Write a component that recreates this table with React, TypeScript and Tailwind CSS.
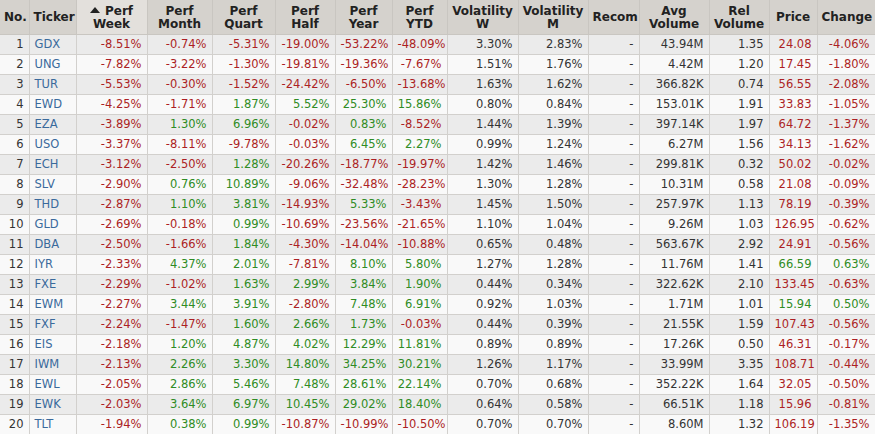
type Row = [string, string, string, string, string, string, string, string, string, string, string, string, string, string];

const rows: Row[] = [
  ["1", "GDX", "-8.51%", "-0.74%", "-5.31%", "-19.00%", "-53.22%", "-48.09%", "3.30%", "2.83%", "43.94M", "1.35", "24.08", "-4.06%"],
  ["2", "UNG", "-7.82%", "-3.22%", "-1.30%", "-19.81%", "-19.36%", "-7.67%", "1.51%", "1.76%", "4.42M", "1.20", "17.45", "-1.80%"],
  ["3", "TUR", "-5.53%", "-0.30%", "-1.52%", "-24.42%", "-6.50%", "-13.68%", "1.63%", "1.62%", "366.82K", "0.74", "56.55", "-2.08%"],
  ["4", "EWD", "-4.25%", "-1.71%", "1.87%", "5.52%", "25.30%", "15.86%", "0.80%", "0.84%", "153.01K", "1.91", "33.83", "-1.05%"],
  ["5", "EZA", "-3.89%", "1.30%", "6.96%", "-0.02%", "0.83%", "-8.52%", "1.44%", "1.39%", "397.14K", "1.97", "64.72", "-1.37%"],
  ["6", "USO", "-3.37%", "-8.11%", "-9.78%", "-0.03%", "6.45%", "2.27%", "0.99%", "1.24%", "6.27M", "1.56", "34.13", "-1.62%"],
  ["7", "ECH", "-3.12%", "-2.50%", "1.28%", "-20.26%", "-18.77%", "-19.97%", "1.42%", "1.46%", "299.81K", "0.32", "50.02", "-0.02%"],
  ["8", "SLV", "-2.90%", "0.76%", "10.89%", "-9.06%", "-32.48%", "-28.23%", "1.30%", "1.28%", "10.31M", "0.58", "21.08", "-0.09%"],
  ["9", "THD", "-2.87%", "1.10%", "3.81%", "-14.93%", "5.33%", "-3.43%", "1.45%", "1.50%", "257.97K", "1.13", "78.19", "-0.39%"],
  ["10", "GLD", "-2.69%", "-0.18%", "0.99%", "-10.69%", "-23.56%", "-21.65%", "1.10%", "1.04%", "9.26M", "1.03", "126.95", "-0.62%"],
  ["11", "DBA", "-2.50%", "-1.66%", "1.84%", "-4.30%", "-14.04%", "-10.88%", "0.65%", "0.48%", "563.67K", "2.92", "24.91", "-0.56%"],
  ["12", "IYR", "-2.33%", "4.37%", "2.01%", "-7.81%", "8.10%", "5.80%", "1.27%", "1.28%", "11.76M", "1.41", "66.59", "0.63%"],
  ["13", "FXE", "-2.29%", "-1.02%", "1.63%", "2.99%", "3.84%", "1.90%", "0.44%", "0.34%", "322.62K", "2.10", "133.45", "-0.63%"],
  ["14", "EWM", "-2.27%", "3.44%", "3.91%", "-2.80%", "7.48%", "6.91%", "0.92%", "1.03%", "1.71M", "1.01", "15.94", "0.50%"],
  ["15", "FXF", "-2.24%", "-1.47%", "1.60%", "2.66%", "1.73%", "-0.03%", "0.44%", "0.39%", "21.55K", "1.59", "107.43", "-0.56%"],
  ["16", "EIS", "-2.18%", "1.20%", "4.87%", "4.02%", "12.29%", "11.81%", "0.89%", "0.89%", "17.26K", "0.50", "46.31", "-0.17%"],
  ["17", "IWM", "-2.13%", "2.26%", "3.30%", "14.80%", "34.25%", "30.21%", "1.26%", "1.17%", "33.99M", "3.35", "108.71", "-0.44%"],
  ["18", "EWL", "-2.05%", "2.86%", "5.46%", "7.48%", "28.61%", "22.14%", "0.70%", "0.68%", "352.22K", "1.64", "32.05", "-0.50%"],
  ["19", "EWK", "-2.03%", "3.64%", "6.97%", "10.45%", "29.02%", "18.40%", "0.64%", "0.58%", "66.51K", "1.18", "15.96", "-0.81%"],
  ["20", "TLT", "-1.94%", "0.38%", "0.99%", "-10.87%", "-10.99%", "-10.50%", "0.70%", "0.70%", "8.60M", "1.32", "106.19", "-1.35%"],
];

const widths = [29, 47, 71, 65, 63, 60, 57, 55, 71, 70, 51, 70, 60, 48, 58];

function signColor(v: string) {
  return v.startsWith("-") ? "text-[#ac1f24]" : "text-[#2f8c24]";
}

function SortArrow() {
  return (
    <svg width="10" height="6" viewBox="0 0 10 6" className="mr-[5px] inline-block align-[2px]">
      <polygon points="5,0 10,6 0,6" fill="#222" />
    </svg>
  );
}

function Head({ children, align = "center", sorted = false }: { children: React.ReactNode; align?: "left" | "center"; sorted?: boolean }) {
  return (
    <th
      className={`h-[34px] border-r border-b border-[#c9c6c1] px-[4px] pt-[2px] text-[12px] leading-[13px] font-bold text-[#222] whitespace-nowrap ${
        align === "left" ? "text-left" : "text-center"
      } ${sorted ? "bg-[#e3e0dc]" : "bg-[#d5d2cd]"}`}
    >
      {children}
    </th>
  );
}

export default function App() {
  return (
    <div className="w-[875px] h-[434px] overflow-hidden bg-white font-['DejaVu_Sans',Verdana,sans-serif]">
      <table className="w-[875px] table-fixed border-collapse">
        <colgroup>
          {widths.map((w, i) => (
            <col key={i} style={{ width: w }} />
          ))}
        </colgroup>
        <thead>
          <tr>
            <Head align="left">No.</Head>
            <Head align="left">Ticker</Head>
            <Head sorted>
              <SortArrow />
              Perf
              <br />
              Week
            </Head>
            <Head>Perf<br />Month</Head>
            <Head>Perf<br />Quart</Head>
            <Head>Perf<br />Half</Head>
            <Head>Perf<br />Year</Head>
            <Head>Perf<br />YTD</Head>
            <Head>Volatility<br />W</Head>
            <Head>Volatility<br />M</Head>
            <Head>Recom</Head>
            <Head>Avg<br />Volume</Head>
            <Head>Rel<br />Volume</Head>
            <Head>Price</Head>
            <Head>Change</Head>
          </tr>
        </thead>
        <tbody>
          {rows.map((r, idx) => {
            const bg = idx % 2 === 0 ? "bg-[#ebebeb]" : "bg-[#f9f9f9]";
            const cell = "h-[20px] border-r border-b border-[#d2d0cd] px-[5px] text-[11.5px] leading-[19px] whitespace-nowrap";
            const changeColor = signColor(r[13]);
            return (
              <tr key={r[0]} className={bg}>
                <td className={`${cell} text-right text-[#333]`}>{r[0]}</td>
                <td className={`${cell} text-left text-[#3a6a9c]`}>{r[1]}</td>
                {r.slice(2, 8).map((v, i) => (
                  <td key={i} className={`${cell} text-right ${signColor(v)}`}>
                    {v}
                  </td>
                ))}
                <td className={`${cell} text-right text-[#333]`}>{r[8]}</td>
                <td className={`${cell} text-right text-[#333]`}>{r[9]}</td>
                <td className={`${cell} text-right text-[#333]`}>-</td>
                <td className={`${cell} text-right text-[#333]`}>{r[10]}</td>
                <td className={`${cell} text-right text-[#333]`}>{r[11]}</td>
                <td className={`${cell} text-right ${changeColor}`}>{r[12]}</td>
                <td className={`${cell} text-right ${changeColor}`}>{r[13]}</td>
              </tr>
            );
          })}
        </tbody>
      </table>
    </div>
  );
}
